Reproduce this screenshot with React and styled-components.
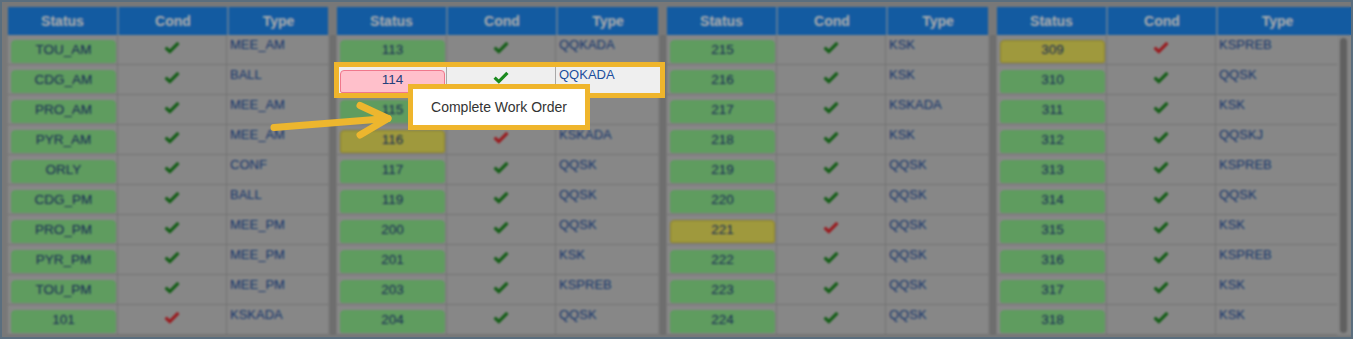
import React from "react";
import styled, { createGlobalStyle } from "styled-components";

const GlobalStyle = createGlobalStyle`
  html, body {
    margin: 0;
    padding: 0;
    background: #7c7c7c;
  }
  body {
    font-family: "Liberation Sans", Arial, Helvetica, sans-serif;
  }
  * {
    box-sizing: border-box;
  }
`;

// status: done | pending | active, cond: ok | bad
const boards = [
  [
    ["TOU_AM", "done", "ok", "MEE_AM"],
    ["CDG_AM", "done", "ok", "BALL"],
    ["PRO_AM", "done", "ok", "MEE_AM"],
    ["PYR_AM", "done", "ok", "MEE_AM"],
    ["ORLY", "done", "ok", "CONF"],
    ["CDG_PM", "done", "ok", "BALL"],
    ["PRO_PM", "done", "ok", "MEE_PM"],
    ["PYR_PM", "done", "ok", "MEE_PM"],
    ["TOU_PM", "done", "ok", "MEE_PM"],
    ["101", "done", "bad", "KSKADA"],
  ],
  [
    ["113", "done", "ok", "QQKADA"],
    ["114", "active", "ok", "QQKADA"],
    ["115", "done", "ok", "KSK"],
    ["116", "pending", "bad", "KSKADA"],
    ["117", "done", "ok", "QQSK"],
    ["119", "done", "ok", "QQSK"],
    ["200", "done", "ok", "QQSK"],
    ["201", "done", "ok", "KSK"],
    ["203", "done", "ok", "KSPREB"],
    ["204", "done", "ok", "QQSK"],
  ],
  [
    ["215", "done", "ok", "KSK"],
    ["216", "done", "ok", "KSK"],
    ["217", "done", "ok", "KSKADA"],
    ["218", "done", "ok", "KSK"],
    ["219", "done", "ok", "QQSK"],
    ["220", "done", "ok", "QQSK"],
    ["221", "pending", "bad", "QQSK"],
    ["222", "done", "ok", "QQSK"],
    ["223", "done", "ok", "QQSK"],
    ["224", "done", "ok", "QQSK"],
  ],
  [
    ["309", "pending", "bad", "KSPREB"],
    ["310", "done", "ok", "QQSK"],
    ["311", "done", "ok", "KSK"],
    ["312", "done", "ok", "QQSKJ"],
    ["313", "done", "ok", "KSPREB"],
    ["314", "done", "ok", "QQSK"],
    ["315", "done", "ok", "KSK"],
    ["316", "done", "ok", "KSPREB"],
    ["317", "done", "ok", "KSK"],
    ["318", "done", "ok", "KSK"],
  ],
];

const panelWidths = [329, 330, 330, 354];

const tones = {
  done: { bg: "#8ce68c", border: "#8ce68c" },
  pending: { bg: "#ebe25a", border: "#cdbf3a" },
  active: { bg: "#ffc0cb", border: "#f0788c" },
};

function Tick({ bad }) {
  return (
    <TickSvg viewBox="0 0 16 13" $bad={bad}>
      <path d="M1.6 6.6 L5.8 10.6 L14.4 1.8" />
    </TickSvg>
  );
}

export default function App() {
  return (
    <>
      <GlobalStyle />
      <Screen>
        {boards.map((rows, b) => {
          const last = b === boards.length - 1;
          return (
            <Panel key={b} $width={panelWidths[b]}>
              <HeaderRow $gutter={last ? 14 : 9} $extend={last}>
                <HeadCell>Status</HeadCell>
                <HeadCell>Cond</HeadCell>
                <HeadCell>Type</HeadCell>
              </HeaderRow>
              <Body>
                <Rows>
                  {rows.map(([id, status, cond, type]) => (
                    <Row key={id} $active={status === "active"}>
                      <StatusCell>
                        <Badge $tone={status}>{id}</Badge>
                      </StatusCell>
                      <CondCell>
                        <Tick bad={cond === "bad"} />
                      </CondCell>
                      <TypeCell>{type}</TypeCell>
                    </Row>
                  ))}
                </Rows>
                <Track $wide={last}>
                  <Thumb $wide={last} />
                </Track>
              </Body>
            </Panel>
          );
        })}
        <Dimmer />
        <Pointer viewBox="0 0 132 44">
          <path d="M9 27.5 L123 18.5" />
          <path d="M95 5.5 L123 18.5 L95 35" />
        </Pointer>
        <Callout>Complete Work Order</Callout>
      </Screen>
    </>
  );
}

const Screen = styled.div`
  position: relative;
  width: 1353px;
  height: 339px;
  display: flex;
  align-items: flex-start;
  padding: 5px 0 0 6px;
  background: #b2b2b2;
  border: 2px solid #5a6e7e;
  overflow: hidden;
`;

const Panel = styled.div`
  width: ${(p) => p.$width}px;
  flex: none;
  display: flex;
  flex-direction: column;
`;

const HeaderRow = styled.div`
  display: grid;
  grid-template-columns: 109px 110px 1fr;
  height: 28px;
  background: #1c86ee;
  ${(p) =>
    p.$extend
      ? `padding-right: ${p.$gutter}px;`
      : `margin-right: ${p.$gutter}px;`}
`;

const HeadCell = styled.div`
  display: flex;
  align-items: center;
  justify-content: center;
  color: #ffffff;
  font-size: 14px;
  font-weight: bold;

  & + & {
    border-left: 2px solid #80b2e4;
  }
`;

const Body = styled.div`
  display: flex;
  height: 300px;
`;

const Rows = styled.div`
  flex: 1;
  display: flex;
  flex-direction: column;
`;

const Row = styled.div`
  display: grid;
  grid-template-columns: 109px 110px 1fr;
  height: 30px;
  flex: none;
  background: ${(p) => (p.$active ? "#efefef" : "#c8c8c8")};
  border-bottom: 1px solid #a8a8a8;
  ${(p) =>
    p.$active &&
    `
    position: relative;
    z-index: 2;
    margin-right: -4px;
    outline: 5px solid #efb52c;
    outline-offset: -2px;
  `}
`;

const StatusCell = styled.div`
  padding: 5px 1px 0 3px;
`;

const Badge = styled.div`
  height: 23px;
  border-radius: 4px 4px 2px 2px;
  background: ${(p) => tones[p.$tone].bg};
  border: 1px solid ${(p) => tones[p.$tone].border};
  color: #24407c;
  font-size: 13.5px;
  line-height: 17px;
  text-align: center;
`;

const CondCell = styled.div`
  display: flex;
  justify-content: center;
  padding-top: 6px;
  border-left: 1px solid #a8a8a8;
  border-right: 1px solid #a8a8a8;
`;

const TickSvg = styled.svg`
  width: 16px;
  height: 13px;

  path {
    fill: none;
    stroke: ${(p) => (p.$bad ? "#e2262c" : "#1a8a1e")};
    stroke-width: 3.2;
    stroke-linejoin: miter;
  }
`;

const TypeCell = styled.div`
  padding: 2px 3px 0;
  color: #1c4e9e;
  font-size: 13px;
  line-height: 16px;
  white-space: nowrap;
  overflow: hidden;
`;

const Track = styled.div`
  width: ${(p) => (p.$wide ? 14 : 9)}px;
  flex: none;
  padding: ${(p) => (p.$wide ? "3px 4px 2px 3px" : "0 1px 0 2px")};
  background: ${(p) => (p.$wide ? "#c4c4c4" : "transparent")};
`;

const Thumb = styled.div`
  height: 100%;
  border-radius: ${(p) => (p.$wide ? 4 : 0)}px;
  background: ${(p) => (p.$wide ? "#8e8e8e" : "#a2a2a2")};
`;

const Dimmer = styled.div`
  position: absolute;
  inset: 0;
  z-index: 1;
  background: rgba(0, 0, 0, 0.32);
  backdrop-filter: blur(1.1px);
`;

const Pointer = styled.svg`
  position: absolute;
  left: 263px;
  top: 98px;
  width: 132px;
  height: 44px;
  z-index: 3;

  path {
    fill: none;
    stroke: #edb62e;
    stroke-width: 7;
    stroke-linecap: round;
    stroke-linejoin: round;
  }
`;

const Callout = styled.div`
  position: absolute;
  left: 406px;
  top: 82px;
  z-index: 3;
  width: 182px;
  height: 46px;
  display: flex;
  align-items: center;
  justify-content: center;
  background: #ffffff;
  border: 5px solid #efb52c;
  color: #333333;
  font-size: 14px;
`;
